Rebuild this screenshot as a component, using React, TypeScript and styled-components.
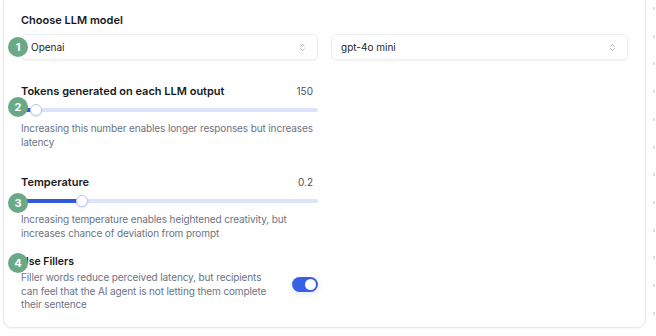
import styled, { createGlobalStyle } from 'styled-components';
import { ChevronsUpDown } from 'lucide-react';

const GlobalStyle = createGlobalStyle`
  html, body {
    margin: 0;
    padding: 0;
    background: #ffffff;
    font-family: Inter, "Noto Sans", sans-serif;
    overflow: hidden;
  }
`;

const Page = styled.div`
  display: flex;
  flex-direction: row;
  align-items: flex-start;
  width: 656px;
  height: 336px;
  padding-left: 3px;
  box-sizing: border-box;
`;

const Card = styled.div`
  position: relative;
  width: 643px;
  margin-top: -8px;
  padding: 19px 16px 15px 17px;
  box-sizing: border-box;
  background: #ffffff;
  border: 1px solid #e6e8ec;
  border-radius: 9px;
  box-shadow: 0 1px 2px rgba(16, 24, 40, 0.04);
`;

const Guide = styled.div`
  width: 2px;
  height: 336px;
  margin-left: 7px;
  background: repeating-linear-gradient(
    to bottom,
    transparent 0px,
    transparent 7px,
    #dcdee2 7px,
    #dcdee2 10px,
    transparent 10px,
    transparent 27.7px
  );
`;

const SectionTitle = styled.div`
  font-size: 11px;
  line-height: 16px;
  font-weight: 600;
  color: #161a20;
  margin-bottom: 6px;
`;

const SelectRow = styled.div`
  display: grid;
  grid-template-columns: 297px 297px;
  column-gap: 13px;
`;

const SelectBox = styled.div`
  display: flex;
  align-items: center;
  justify-content: space-between;
  height: 26px;
  padding: 0 10px 0 9px;
  box-sizing: border-box;
  border: 1px solid #eceef1;
  border-radius: 5px;
  box-shadow: 0 1px 2px rgba(16, 24, 40, 0.05);
  font-size: 10px;
  color: #1b1f26;
  background: #ffffff;
`;

const Settings = styled.div`
  display: flex;
  flex-direction: column;
  width: 297px;
`;

const Setting = styled.div<{ $top: number }>`
  position: relative;
  display: flex;
  flex-direction: column;
  margin-top: ${({ $top }) => $top}px;
`;

const HeadRow = styled.div`
  display: flex;
  justify-content: space-between;
  align-items: center;
  height: 16px;
`;

const Heading = styled.div<{ $small?: boolean }>`
  font-size: ${({ $small }) => ($small ? '10.5px' : '11px')};
  font-weight: 600;
  color: #161a20;
  line-height: ${({ $small }) => ($small ? '14px' : '16px')};
`;

const Value = styled.div`
  font-size: 10px;
  color: #4a5160;
  padding-right: 5px;
`;

const SliderBox = styled.div`
  position: relative;
  height: 14px;
  margin-top: 4px;
  display: flex;
  align-items: center;
`;

const Track = styled.div`
  position: relative;
  width: 100%;
  height: 4px;
  border-radius: 2px;
  background: #dce4fb;
`;

const Fill = styled.div`
  position: absolute;
  left: 0;
  top: 0;
  bottom: 0;
  border-radius: 2px;
  background: #2f5ae0;
`;

const Thumb = styled.div`
  position: absolute;
  top: 50%;
  width: 12px;
  height: 12px;
  margin-left: -6px;
  margin-top: -6px;
  box-sizing: border-box;
  border-radius: 50%;
  background: #ffffff;
  border: 1px solid #b9c8f3;
  box-shadow: 0 1px 2px rgba(0, 0, 0, 0.12);
`;

const Desc = styled.div`
  margin-top: 4px;
  font-size: 10px;
  line-height: 14px;
  letter-spacing: -0.12px;
  color: #6b7383;
`;

const FillerRow = styled.div`
  display: flex;
  align-items: flex-start;
  gap: 17px;
  margin-top: 2px;
`;

const FillerText = styled.div`
  flex: 1;
  font-size: 10px;
  line-height: 13.5px;
  letter-spacing: -0.12px;
  color: #6b7383;
`;

const Toggle = styled.div<{ $on: boolean }>`
  position: relative;
  flex: none;
  width: 26px;
  height: 15px;
  margin-top: 6px;
  border-radius: 8px;
  background: ${({ $on }) => ($on ? '#3860e3' : '#d1d5db')};
  box-shadow: 0 2px 6px rgba(56, 96, 227, 0.15);

  &::after {
    content: '';
    position: absolute;
    top: 2px;
    left: ${({ $on }) => ($on ? '13px' : '2px')};
    width: 11px;
    height: 11px;
    border-radius: 50%;
    background: #ffffff;
  }
`;

const Badge = styled.div<{ $x: number; $y: number }>`
  position: absolute;
  left: ${({ $x }) => $x}px;
  top: ${({ $y }) => $y}px;
  width: 20px;
  height: 20px;
  border-radius: 50%;
  background: #6aa986;
  color: #ffffff;
  font-size: 11px;
  font-weight: 700;
  display: flex;
  align-items: center;
  justify-content: center;
  z-index: 2;
`;

interface SliderProps {
  percent: number;
}

function Slider({ percent }: SliderProps) {
  return (
    <SliderBox>
      <Track>
        <Fill style={{ width: `${percent}%` }} />
        <Thumb style={{ left: `${percent}%` }} />
      </Track>
    </SliderBox>
  );
}

function Select({ value }: { value: string }) {
  return (
    <SelectBox>
      <span>{value}</span>
      <ChevronsUpDown size={9} color="#9aa1ad" strokeWidth={2} />
    </SelectBox>
  );
}

export default function App() {
  return (
    <>
      <GlobalStyle />
      <Page>
        <Card>
          <SectionTitle>Choose LLM model</SectionTitle>
          <SelectRow>
            <Select value="Openai" />
            <Select value="gpt-4o mini" />
          </SelectRow>
          <Badge $x={4} $y={44}>1</Badge>

          <Settings>
            <Setting $top={23}>
              <Badge $x={-13} $y={14}>2</Badge>
              <HeadRow>
                <Heading>Tokens generated on each LLM output</Heading>
                <Value>150</Value>
              </HeadRow>
              <Slider percent={5} />
              <Desc>
                Increasing this number enables longer responses but increases
                latency
              </Desc>
            </Setting>

            <Setting $top={25}>
              <Badge $x={-13} $y={19}>3</Badge>
              <HeadRow>
                <Heading>Temperature</Heading>
                <Value>0.2</Value>
              </HeadRow>
              <Slider percent={20.5} />
              <Desc>
                Increasing temperature enables heightened creativity, but
                increases chance of deviation from prompt
              </Desc>
            </Setting>

            <Setting $top={15}>
              <Badge $x={-13} $y={-2}>4</Badge>
              <Heading $small>Use Fillers</Heading>
              <FillerRow>
                <FillerText>
                  Filler words reduce perceived latency, but recipients can feel
                  that the AI agent is not letting them complete their sentence
                </FillerText>
                <Toggle $on />
              </FillerRow>
            </Setting>
          </Settings>
        </Card>
        <Guide />
      </Page>
    </>
  );
}
